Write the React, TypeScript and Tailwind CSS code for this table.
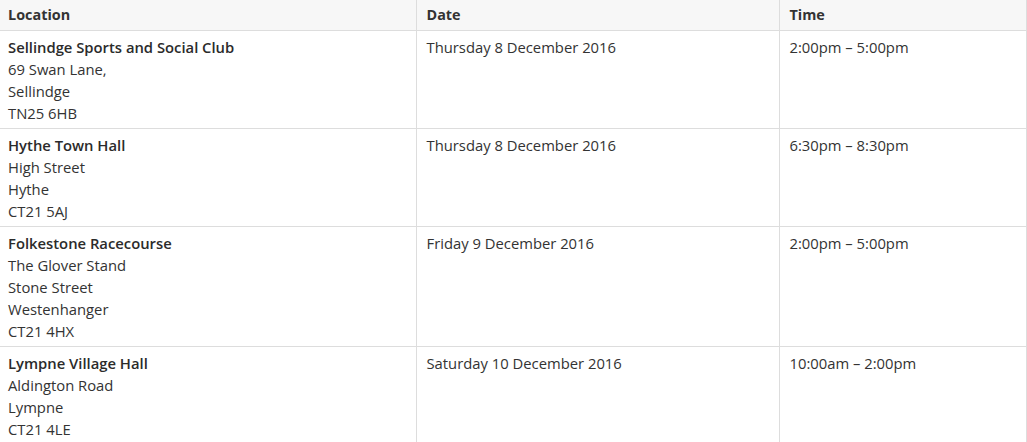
import React from "react";

const rows = [
  {
    name: "Sellindge Sports and Social Club",
    lines: ["69 Swan Lane,", "Sellindge", "TN25 6HB"],
    date: "Thursday 8 December 2016",
    time: "2:00pm – 5:00pm",
  },
  {
    name: "Hythe Town Hall",
    lines: ["High Street", "Hythe", "CT21 5AJ"],
    date: "Thursday 8 December 2016",
    time: "6:30pm – 8:30pm",
  },
  {
    name: "Folkestone Racecourse",
    lines: ["The Glover Stand", "Stone Street", "Westenhanger", "CT21 4HX"],
    date: "Friday 9 December 2016",
    time: "2:00pm – 5:00pm",
  },
  {
    name: "Lympne Village Hall",
    lines: ["Aldington Road", "Lympne", "CT21 4LE"],
    date: "Saturday 10 December 2016",
    time: "10:00am – 2:00pm",
  },
];

export default function App() {
  return (
    <div
      className="bg-white text-[#333] w-[1027px] h-[442px] overflow-hidden"
      style={{ fontFamily: "'Open Sans', 'Noto Sans', sans-serif" }}
    >
      <table className="w-[1026px] border-collapse table-fixed text-[14.8px] leading-[22px]">
        <colgroup>
          <col className="w-[416px]" />
          <col className="w-[363px]" />
          <col className="w-[247px]" />
        </colgroup>
        <thead>
          <tr className="bg-[#f7f7f7]">
            <th className="text-left font-bold text-[14.4px] h-[30px] px-2 py-0 border-b border-r border-[#dddddd] align-middle">Location</th>
            <th className="text-left font-bold text-[14.4px] px-[10px] py-0 border-b border-r border-[#dddddd] align-middle">Date</th>
            <th className="text-left font-bold text-[14.4px] px-[10px] py-0 border-b border-r border-[#dddddd] align-middle">Time</th>
          </tr>
        </thead>
        <tbody>
          {rows.map((r) => (
            <tr key={r.name}>
              <td className="px-2 pt-[5px] pb-[4px] border-b border-r border-[#dddddd] align-top">
                <div className="font-semibold text-[#2b2b2b]">{r.name}</div>
                {r.lines.map((l) => (
                  <div key={l}>{l}</div>
                ))}
              </td>
              <td className="px-[10px] pt-[5px] pb-[4px] border-b border-r border-[#dddddd] align-top">{r.date}</td>
              <td className="px-[10px] pt-[5px] pb-[4px] border-b border-r border-[#dddddd] align-top">{r.time}</td>
            </tr>
          ))}
        </tbody>
      </table>
    </div>
  );
}
